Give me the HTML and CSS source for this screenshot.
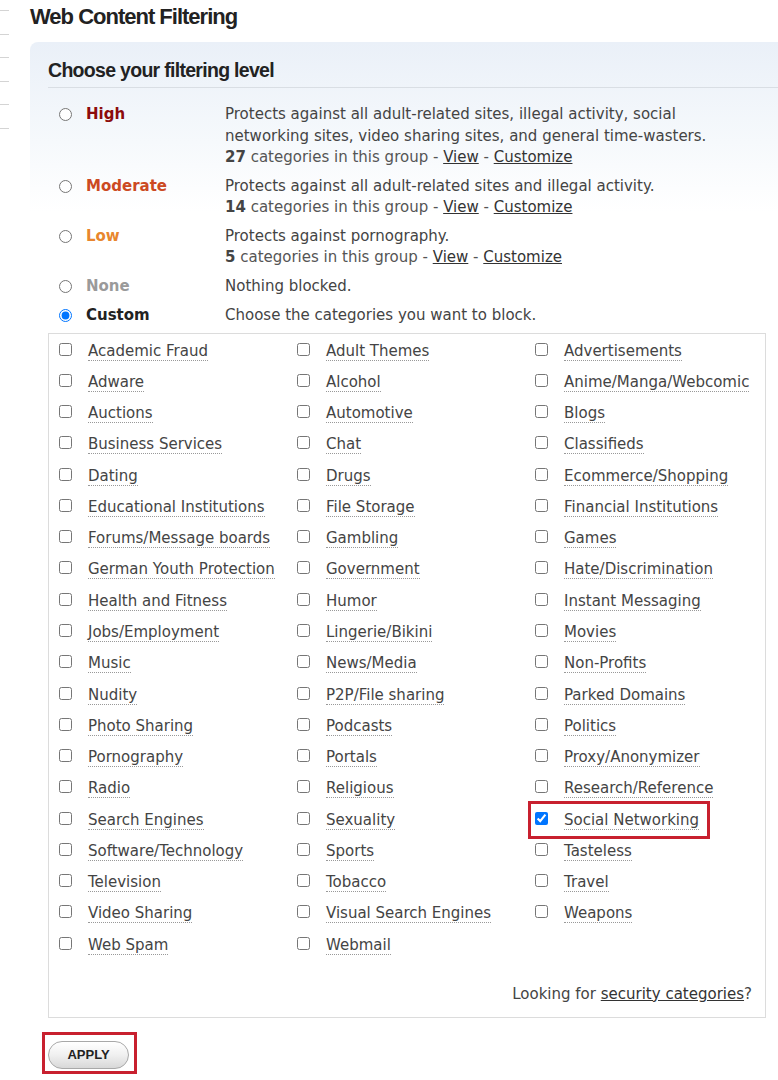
FILE: index.html
```html
<!DOCTYPE html>
<html lang="en">
<head>
  <meta charset="UTF-8">
  <meta name="viewport" content="width=device-width, initial-scale=1.0">
  <title>Web Content Filtering</title>
  <link rel="stylesheet" href="styles.css">
</head>
<body>
<div class="page">
  <div class="sidebar">
    <span></span><span></span><span></span><span></span><span></span><span></span>
  </div>

  <div class="content">
    <h1>Web Content Filtering</h1>

    <div class="panel">
      <h2>Choose your filtering level</h2>

      <div class="level">
        <label class="level-name high"><input type="radio" name="level"> High</label>
        <div class="level-info">
          Protects against all adult-related sites, illegal activity, social networking sites, video sharing sites, and general time-wasters.
          <div class="count"><b>27</b> categories in this group - <a href="#">View</a> - <a href="#">Customize</a></div>
        </div>
      </div>
      <div class="level">
        <label class="level-name moderate"><input type="radio" name="level"> Moderate</label>
        <div class="level-info">
          Protects against all adult-related sites and illegal activity.
          <div class="count"><b>14</b> categories in this group - <a href="#">View</a> - <a href="#">Customize</a></div>
        </div>
      </div>
      <div class="level">
        <label class="level-name low"><input type="radio" name="level"> Low</label>
        <div class="level-info">
          Protects against pornography.
          <div class="count"><b>5</b> categories in this group - <a href="#">View</a> - <a href="#">Customize</a></div>
        </div>
      </div>
      <div class="level">
        <label class="level-name none"><input type="radio" name="level"> None</label>
        <div class="level-info">Nothing blocked.</div>
      </div>
      <div class="level last">
        <label class="level-name custom"><input type="radio" name="level" checked> Custom</label>
        <div class="level-info">Choose the categories you want to block.</div>
      </div>

      <div class="categories">
        <ul class="category-list">
          <li><input type="checkbox"><span>Academic Fraud</span></li>
          <li><input type="checkbox"><span>Adult Themes</span></li>
          <li><input type="checkbox"><span>Advertisements</span></li>
          <li><input type="checkbox"><span>Adware</span></li>
          <li><input type="checkbox"><span>Alcohol</span></li>
          <li><input type="checkbox"><span>Anime/Manga/Webcomic</span></li>
          <li><input type="checkbox"><span>Auctions</span></li>
          <li><input type="checkbox"><span>Automotive</span></li>
          <li><input type="checkbox"><span>Blogs</span></li>
          <li><input type="checkbox"><span>Business Services</span></li>
          <li><input type="checkbox"><span>Chat</span></li>
          <li><input type="checkbox"><span>Classifieds</span></li>
          <li><input type="checkbox"><span>Dating</span></li>
          <li><input type="checkbox"><span>Drugs</span></li>
          <li><input type="checkbox"><span>Ecommerce/Shopping</span></li>
          <li><input type="checkbox"><span>Educational Institutions</span></li>
          <li><input type="checkbox"><span>File Storage</span></li>
          <li><input type="checkbox"><span>Financial Institutions</span></li>
          <li><input type="checkbox"><span>Forums/Message boards</span></li>
          <li><input type="checkbox"><span>Gambling</span></li>
          <li><input type="checkbox"><span>Games</span></li>
          <li><input type="checkbox"><span>German Youth Protection</span></li>
          <li><input type="checkbox"><span>Government</span></li>
          <li><input type="checkbox"><span>Hate/Discrimination</span></li>
          <li><input type="checkbox"><span>Health and Fitness</span></li>
          <li><input type="checkbox"><span>Humor</span></li>
          <li><input type="checkbox"><span>Instant Messaging</span></li>
          <li><input type="checkbox"><span>Jobs/Employment</span></li>
          <li><input type="checkbox"><span>Lingerie/Bikini</span></li>
          <li><input type="checkbox"><span>Movies</span></li>
          <li><input type="checkbox"><span>Music</span></li>
          <li><input type="checkbox"><span>News/Media</span></li>
          <li><input type="checkbox"><span>Non-Profits</span></li>
          <li><input type="checkbox"><span>Nudity</span></li>
          <li><input type="checkbox"><span>P2P/File sharing</span></li>
          <li><input type="checkbox"><span>Parked Domains</span></li>
          <li><input type="checkbox"><span>Photo Sharing</span></li>
          <li><input type="checkbox"><span>Podcasts</span></li>
          <li><input type="checkbox"><span>Politics</span></li>
          <li><input type="checkbox"><span>Pornography</span></li>
          <li><input type="checkbox"><span>Portals</span></li>
          <li><input type="checkbox"><span>Proxy/Anonymizer</span></li>
          <li><input type="checkbox"><span>Radio</span></li>
          <li><input type="checkbox"><span>Religious</span></li>
          <li><input type="checkbox"><span>Research/Reference</span></li>
          <li><input type="checkbox"><span>Search Engines</span></li>
          <li><input type="checkbox"><span>Sexuality</span></li>
          <li class="marked"><input type="checkbox" checked><span>Social Networking</span></li>
          <li><input type="checkbox"><span>Software/Technology</span></li>
          <li><input type="checkbox"><span>Sports</span></li>
          <li><input type="checkbox"><span>Tasteless</span></li>
          <li><input type="checkbox"><span>Television</span></li>
          <li><input type="checkbox"><span>Tobacco</span></li>
          <li><input type="checkbox"><span>Travel</span></li>
          <li><input type="checkbox"><span>Video Sharing</span></li>
          <li><input type="checkbox"><span>Visual Search Engines</span></li>
          <li><input type="checkbox"><span>Weapons</span></li>
          <li><input type="checkbox"><span>Web Spam</span></li>
          <li><input type="checkbox"><span>Webmail</span></li>
        </ul>
        <p class="security-link">Looking for <a href="#">security categories</a>?</p>
      </div>
    </div>

    <div class="apply-wrap">
      <button type="button" class="apply-button">APPLY</button>
    </div>
  </div>
</div>
</body>
</html>
```

FILE: styles.css
```css
body {
  margin: 0;
  font-family: "DejaVu Sans", Verdana, sans-serif;
  font-size: 15px;
  color: #444;
  background-color: #fff;
  overflow-x: hidden;
}
.page {
  display: flex;
}
.sidebar {
  width: 9px;
  flex-shrink: 0;
  display: flex;
  flex-direction: column;
  gap: 22.5px;
  padding-top: 10px;
}
.sidebar span {
  display: block;
  height: 1px;
  background-color: #d4d4d4;
}
.content {
  flex: 1;
  padding-left: 21px;
}
h1 {
  margin: 0;
  padding-top: 4px;
  font-family: "Liberation Sans", Arial, sans-serif;
  font-size: 22px;
  line-height: 26px;
  letter-spacing: -1px;
  color: #222;
}
.panel {
  margin-top: 12px;
  width: 754px;
  padding: 16px 0 0 18px;
  border-radius: 8px 0 0 0;
  background: linear-gradient(#eaf0f8, #f6f9fc 100px, #fff 170px);
}
h2 {
  margin: 0 0 16px;
  padding-bottom: 5px;
  font-family: "Liberation Sans", Arial, sans-serif;
  font-size: 19.5px;
  line-height: 24px;
  letter-spacing: -0.7px;
  color: #222;
  border-bottom: 1px solid #d9dee4;
}
.level {
  display: flex;
  line-height: 21.5px;
  margin-bottom: 7px;
}
.level.last {
  margin-top: 8px;
  margin-bottom: 6px;
}
.level-name {
  width: 171px;
  padding-left: 6px;
  flex-shrink: 0;
  font-weight: bold;
  display: flex;
  align-items: center;
  align-self: flex-start;
}
.level-name input {
  margin: 0 14px 0 5px;
  width: 13px;
  height: 13px;
}
.high { color: #8c0c0c; }
.moderate { color: #cc4a22; }
.low { color: #e8862d; }
.none { color: #9a9a9a; }
.custom { color: #222; }
.level-info {
  color: #444;
  width: 505px;
}
.count {
  color: #555;
}
.count b {
  color: #444;
}
.level-info a, .security-link a {
  color: #333;
  text-decoration: underline;
}
.categories {
  border: 1px solid #dcdcdc;
  background-color: #fff;
  width: 716px;
  padding: 2px 0 12px;
}
.category-list {
  list-style: none;
  margin: 0;
  padding: 0 0 0 6px;
  display: grid;
  grid-template-columns: 238px 238px 238px;
  grid-auto-rows: 31.27px;
}
.category-list li {
  display: flex;
  align-items: center;
  align-self: stretch;
  justify-self: start;
  padding-right: 8px;
}
.category-list input {
  margin: 0 16px 4px 4px;
  width: 13px;
  height: 13px;
}
.category-list span {
  color: #444;
  line-height: 18px;
  border-bottom: 1px dotted #999;
}
.category-list .marked {
  outline: 3px solid #c8202f;
  outline-offset: 0;
}
.security-link {
  margin: 22px 13px 0 0;
  text-align: right;
  line-height: 22px;
  color: #444;
}
.apply-wrap {
  display: inline-block;
  margin: 14px 0 0 12px;
  padding: 6px 5px 2px 3px;
  border: 3px solid #c8202f;
}
.apply-button {
  display: block;
  width: 81px;
  height: 28px;
  padding: 0;
  border: 1px solid #a8a8a8;
  border-radius: 14px;
  background: linear-gradient(#ffffff, #f0f0f0 50%, #d8d8d8);
  font-family: "Liberation Sans", Arial, sans-serif;
  font-size: 13px;
  font-weight: bold;
  color: #222;
  cursor: pointer;
}
```
